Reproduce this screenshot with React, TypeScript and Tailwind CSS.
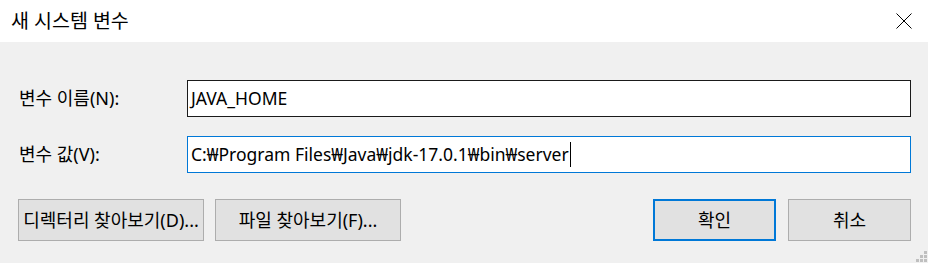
const FONT = "font-['Noto_Sans','Noto_Sans_CJK_KR',sans-serif]";

function Field({ label, value, focused }: { label: string; value: string; focused?: boolean }) {
  return (
    <div className="flex items-center">
      <label className="w-[169px] shrink-0 pl-[1px] text-[18px] text-black">{label}</label>
      <div
        className={`flex h-[37px] flex-1 items-center bg-white pl-[3px] text-[17.5px] text-black ${
          focused ? "border border-[#0078d7]" : "border border-[#1a1a1a]"
        }`}
      >
        <span className="whitespace-nowrap">{value}</span>
        {focused && <span className="ml-[1px] h-[25px] w-[1px] bg-black" />}
      </div>
    </div>
  );
}

function Button({ children, primary, className = "" }: { children: React.ReactNode; primary?: boolean; className?: string }) {
  return (
    <button
      className={`flex h-[42px] items-center justify-center whitespace-nowrap bg-[#e1e1e1] text-[18px] text-black ${
        primary ? "border-2 border-[#0078d7]" : "border border-[#adadad]"
      } ${className}`}
    >
      {children}
    </button>
  );
}

export default function App() {
  return (
    <div className={`flex h-[263px] w-[928px] flex-col bg-[#f0f0f0] ${FONT}`}>
      {/* Title bar */}
      <div className="flex h-[42px] shrink-0 items-center justify-between bg-white pl-[11px] pr-[16px]">
        <span className="text-[19.5px] text-black">새 시스템 변수</span>
        <svg width="16" height="16" viewBox="0 0 16 16" className="text-black">
          <path d="M0.5 0.5 L15.5 15.5 M15.5 0.5 L0.5 15.5" stroke="currentColor" strokeWidth="1" fill="none" />
        </svg>
      </div>

      {/* Body */}
      <div className="relative flex flex-1 flex-col pl-[18px] pr-[17px] pt-[38px]">
        <div className="flex flex-col gap-[19px]">
          <Field label="변수 이름(N):" value="JAVA_HOME" />
          <Field label="변수 값(V):" value="C:₩Program Files₩Java₩jdk-17.0.1₩bin₩server" focused />
        </div>

        <div className="mt-[26px] flex items-center">
          <Button className="w-[186px]">디렉터리 찾아보기(D)...</Button>
          <Button className="ml-[11px] w-[186px]">파일 찾아보기(F)...</Button>
          <div className="flex-1" />
          <Button primary className="w-[123px]">확인</Button>
          <Button className="ml-[12px] w-[123px]">취소</Button>
        </div>

        {/* Resize grip */}
        <div className="absolute bottom-[1px] right-[1px] grid grid-cols-3 gap-[1px]">
          <span className="h-[3px] w-[3px]" />
          <span className="h-[3px] w-[3px]" />
          <span className="h-[3px] w-[3px] bg-[#bfbfbf]" />
          <span className="h-[3px] w-[3px]" />
          <span className="h-[3px] w-[3px] bg-[#bfbfbf]" />
          <span className="h-[3px] w-[3px] bg-[#bfbfbf]" />
          <span className="h-[3px] w-[3px] bg-[#bfbfbf]" />
          <span className="h-[3px] w-[3px] bg-[#bfbfbf]" />
          <span className="h-[3px] w-[3px] bg-[#bfbfbf]" />
        </div>
      </div>
    </div>
  );
}
